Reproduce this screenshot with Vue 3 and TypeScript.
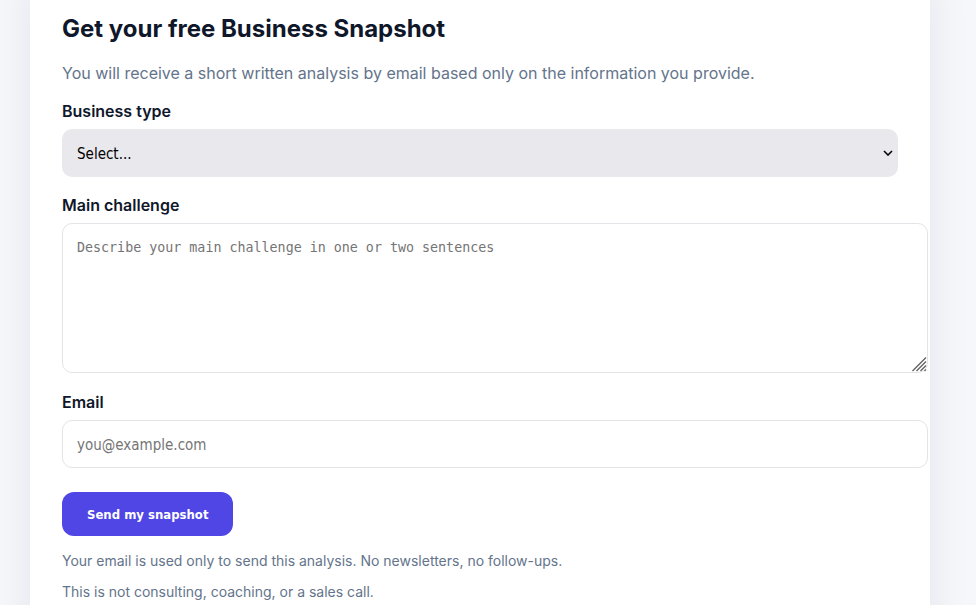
<script setup lang="ts">
import { ref } from 'vue'

const businessTypes: string[] = []
const businessType = ref('')
const challenge = ref('')
const email = ref('')
</script>

<template>
  <div class="page">
    <main class="card">
      <h2 class="title">Get your free Business Snapshot</h2>
      <p class="intro">
        You will receive a short written analysis by email based only on the information you provide.
      </p>

      <form class="form" @submit.prevent>
        <div class="field">
          <label for="business-type">Business type</label>
          <div class="select-wrap">
            <select id="business-type" v-model="businessType" class="select">
              <option value="">Select...</option>
              <option v-for="type in businessTypes" :key="type" :value="type">{{ type }}</option>
            </select>
            <svg class="chevron" viewBox="0 0 10 6" aria-hidden="true">
              <path d="M1 1l4 4 4-4" fill="none" stroke="#000" stroke-width="1.6" />
            </svg>
          </div>
        </div>

        <div class="field">
          <label for="challenge">Main challenge</label>
          <div class="textarea-wrap">
            <textarea
              id="challenge"
              v-model="challenge"
              class="control textarea"
              placeholder="Describe your main challenge in one or two sentences"
            ></textarea>
            <svg class="grip" viewBox="0 0 15 15" aria-hidden="true">
              <path d="M0.500 14L14 0.500M4.500 14l9.500-9.500M8.500 14l5.500-5.500M12.500 14l1.500-1.500" fill="none" stroke="#666" stroke-width="1.400" />
            </svg>
          </div>
        </div>

        <div class="field">
          <label for="email">Email</label>
          <input id="email" v-model="email" class="control input" type="email" placeholder="you@example.com" />
        </div>

        <button class="submit" type="submit">Send my snapshot</button>
      </form>

      <p class="note">Your email is used only to send this analysis. No newsletters, no follow-ups.</p>
      <p class="note">This is not consulting, coaching, or a sales call.</p>
    </main>
  </div>
</template>

<style>
body {
  margin: 0;
  background: #f6f7fb;
}
</style>

<style scoped>
.page {
  box-sizing: border-box;
  display: flex;
  flex-direction: column;
  height: 100vh;
  overflow: hidden;
  padding-right: 16px;
  background: #f6f7fb;
  color: #0f172a;
  font-family: Inter, "Liberation Sans", sans-serif;
  font-size: 16px;
}

/* The card runs past the top and bottom edges of the viewport. */
.card {
  box-sizing: border-box;
  flex: 1 0 auto;
  width: 100%;
  max-width: 900px;
  margin: -40px auto -80px;
  padding: 51px 32px 80px;
  background: #fff;
  box-shadow: 0 20px 40px rgba(15, 23, 42, 0.08);
}

.title {
  margin: 0 0 13px;
  font-size: 24px;
  line-height: 36px;
  font-weight: 700;
}

.intro {
  margin: 0 0 13px;
  line-height: 26px;
  color: #64748b;
}

.form {
  display: flex;
  flex-direction: column;
  align-items: flex-start;
  gap: 16px;
}

.field {
  display: flex;
  flex-direction: column;
  align-items: flex-start;
  gap: 6px;
  width: 100%;
}

label {
  line-height: 24px;
  font-weight: 600;
}

.select-wrap {
  position: relative;
  width: 100%;
}

.select {
  appearance: none;
  display: block;
  box-sizing: border-box;
  width: 100%;
  height: 48px;
  padding: 2px 32px 0 15px;
  border: 0;
  border-radius: 10px;
  background: #e9e9ed;
  color: #000;
  font-family: "DejaVu Sans Condensed", "DejaVu Sans", sans-serif;
  font-size: 15px;
}

.chevron {
  position: absolute;
  top: 21px;
  right: 5px;
  width: 10px;
  height: 6px;
  pointer-events: none;
}

.control {
  display: block;
  width: 100%;
  padding: 14px;
  border: 1px solid #e2e4e8;
  border-radius: 10px;
  background: #fff;
  color: #0f172a;
}

.control::placeholder {
  color: #757575;
  opacity: 1;
}

.textarea-wrap {
  position: relative;
  width: calc(100% + 30px);
  padding-bottom: 1px;
}

.textarea {
  box-sizing: border-box;
  height: 150px;
  resize: none;
  font-family: "DejaVu Sans Mono", monospace;
  line-height: 20px;
}

.grip {
  position: absolute;
  right: 1px;
  bottom: 2px;
  width: 15px;
  height: 15px;
  pointer-events: none;
}

.input {
  height: 18px;
  padding-top: 15px;
  padding-bottom: 13px;
  font-family: "DejaVu Sans Condensed", "DejaVu Sans", sans-serif;
  font-size: 15px;
}

.submit {
  height: 44px;
  margin-top: 8px;
  padding: 0 25px;
  border: 0;
  border-radius: 12px;
  background: #4f46e5;
  color: #fff;
  font-family: "DejaVu Sans Condensed", "DejaVu Sans", sans-serif;
  font-size: 13px;
  font-weight: 700;
}

.note {
  margin: 8px 0 0;
  font-size: 14px;
  line-height: 23px;
  color: #64748b;
}

.form + .note {
  margin-top: 13px;
}
</style>
